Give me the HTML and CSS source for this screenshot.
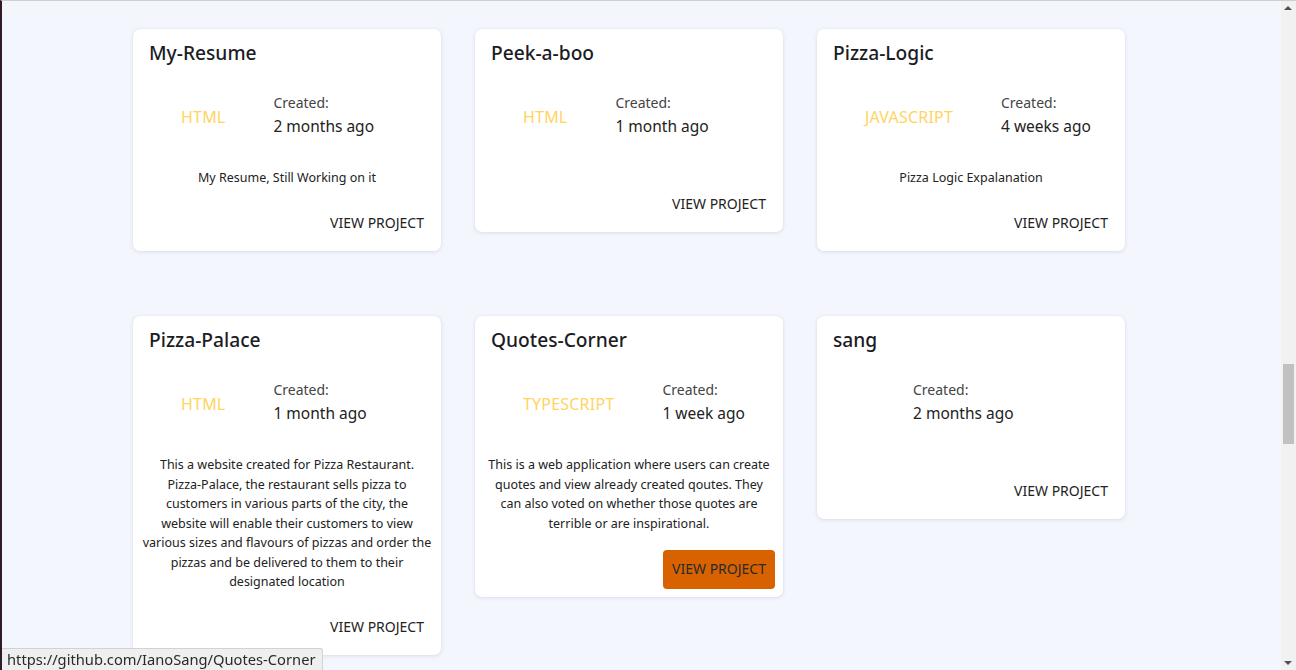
FILE: index.html
```html
<!DOCTYPE html>
<html lang="en">
<head>
<meta charset="utf-8">
<title>Projects</title>
<link rel="stylesheet" href="styles.css">
</head>
<body>
<main class="projects">
  <article class="card">
    <h2 class="card-title">My-Resume</h2>
    <div class="info">
      <span class="lang">HTML</span>
      <div class="created"><div class="label">Created:</div><div class="value">2 months ago</div></div>
    </div>
    <p class="desc">My Resume, Still Working on it</p>
    <div class="actions"><a class="btn">View Project</a></div>
  </article>
  <article class="card">
    <h2 class="card-title">Peek-a-boo</h2>
    <div class="info">
      <span class="lang">HTML</span>
      <div class="created"><div class="label">Created:</div><div class="value">1 month ago</div></div>
    </div>
    <p class="desc"></p>
    <div class="actions"><a class="btn">View Project</a></div>
  </article>
  <article class="card">
    <h2 class="card-title">Pizza-Logic</h2>
    <div class="info">
      <span class="lang">JavaScript</span>
      <div class="created"><div class="label">Created:</div><div class="value">4 weeks ago</div></div>
    </div>
    <p class="desc">Pizza Logic Expalanation</p>
    <div class="actions"><a class="btn">View Project</a></div>
  </article>
  <article class="card">
    <h2 class="card-title">Pizza-Palace</h2>
    <div class="info">
      <span class="lang">HTML</span>
      <div class="created"><div class="label">Created:</div><div class="value">1 month ago</div></div>
    </div>
    <p class="desc">This a website created for Pizza Restaurant.<br>Pizza-Palace, the restaurant sells pizza to<br>customers in various parts of the city, the<br>website will enable their customers to view<br>various sizes and flavours of pizzas and order the<br>pizzas and be delivered to them to their<br>designated location</p>
    <div class="actions"><a class="btn">View Project</a></div>
  </article>
  <article class="card">
    <h2 class="card-title">Quotes-Corner</h2>
    <div class="info">
      <span class="lang">TypeScript</span>
      <div class="created"><div class="label">Created:</div><div class="value">1 week ago</div></div>
    </div>
    <p class="desc">This is a web application where users can create<br>quotes and view already created qoutes. They<br>can also voted on whether those quotes are<br>terrible or are inspirational.</p>
    <div class="actions"><a class="btn btn-hover">View Project</a></div>
  </article>
  <article class="card">
    <h2 class="card-title">sang</h2>
    <div class="info">
      <span class="lang"></span>
      <div class="created"><div class="label">Created:</div><div class="value">2 months ago</div></div>
    </div>
    <p class="desc"></p>
    <div class="actions"><a class="btn">View Project</a></div>
  </article>
</main>
<div class="scrollbar">
  <span class="arrow up"></span>
  <span class="thumb"></span>
  <span class="arrow down"></span>
</div>
<div class="status">https://github.com/IanoSang/Quotes-Corner</div>
</body>
</html>
```

FILE: styles.css
```css
html, body {
  margin: 0;
  padding: 0;
}
body {
  width: 1294px;
  height: 669px;
  overflow: hidden;
  background: #f3f6fd;
  border-top: 1px solid #cfcfcf;
  border-left: 2px solid #2f1b2b;
  font-family: "Noto Sans", "Open Sans", sans-serif;
  color: #222;
}
.projects {
  display: grid;
  grid-template-columns: repeat(3, 308px);
  column-gap: 34px;
  row-gap: 65px;
  align-items: start;
  padding: 28px 0 0 131px;
}
.card {
  background: #fff;
  border-radius: 7px;
  box-shadow: 0 1px 4px rgba(60, 60, 90, 0.12), 0 0 1px rgba(60, 60, 90, 0.1);
  display: flex;
  flex-direction: column;
}
.card-title {
  margin: 0;
  padding: 12px 16px 0;
  font-size: 19.2px;
  line-height: 24px;
  font-weight: 500;
  color: #1c1c24;
}
.info {
  display: flex;
  align-items: center;
  gap: 48px;
  margin-top: 26px;
  padding-left: 48px;
}
.lang {
  color: #ffd460;
  font-size: 16px;
  letter-spacing: 0.2px;
  line-height: 22px;
  padding-top: 5px;
  text-transform: uppercase;
}
.created .label {
  font-size: 14px;
  line-height: 23px;
  color: #444;
}
.created .value {
  font-size: 15.5px;
  line-height: 24px;
  color: #222;
}
.desc {
  margin: 0;
  padding: 30px 5px 0;
  font-size: 12.5px;
  line-height: 19.5px;
  text-align: center;
  color: #222;
}
.actions {
  display: flex;
  justify-content: flex-end;
  padding: 16.5px 8px 8px;
}
.btn {
  height: 39px;
  display: flex;
  align-items: center;
  padding: 0 9px 2px;
  box-sizing: border-box;
  border-radius: 4px;
  font-size: 14px;
  text-transform: uppercase;
  color: #222;
}
.btn-hover {
  background: #d96200;
  color: #2a2a2a;
}
.scrollbar {
  position: fixed;
  top: 1px;
  right: 0;
  width: 15px;
  height: 669px;
  background: #f1f1f1;
}
.arrow {
  position: absolute;
  left: 3px;
  width: 0;
  height: 0;
  border-left: 4.5px solid transparent;
  border-right: 4.5px solid transparent;
}
.arrow.up {
  top: 5px;
  border-bottom: 4px solid #505050;
}
.arrow.down {
  bottom: 5px;
  border-top: 4px solid #505050;
}
.thumb {
  position: absolute;
  left: 2px;
  top: 363px;
  width: 11px;
  height: 80px;
  background: #c1c1c1;
}
.status {
  position: fixed;
  left: 2px;
  bottom: 0;
  height: 21px;
  padding: 0 6px 0 5px;
  background: #efefef;
  border-top: 1px solid #d2d2d2;
  border-right: 1px solid #d2d2d2;
  border-top-right-radius: 3px;
  font-size: 14.7px;
  line-height: 21px;
  color: #2a2a2a;
}
```
